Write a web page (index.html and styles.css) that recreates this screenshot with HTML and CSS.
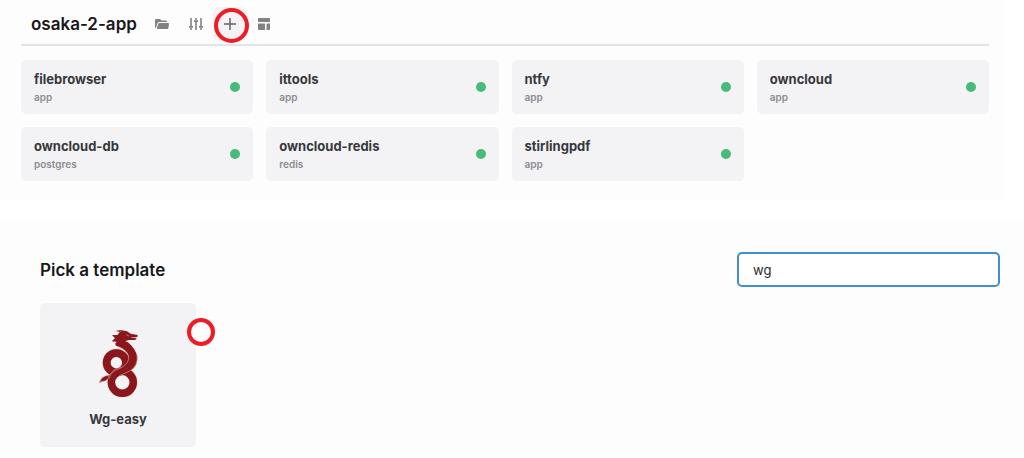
FILE: index.html
```html
<!DOCTYPE html>
<html lang="en">
<head>
<meta charset="utf-8">
<meta name="viewport" content="width=device-width, initial-scale=1">
<title>osaka-2-app</title>
<link rel="stylesheet" href="styles.css">
</head>
<body>
<section class="panel project">
  <header class="project-header">
    <h1 class="project-title">osaka-2-app</h1>
    <nav class="toolbar" aria-label="Project">
      <button class="tool" type="button" aria-label="Services">
        <svg width="16" height="16" viewBox="0 0 16 16" fill="currentColor"><path d="M1 11V4q0-1 1-1h4l1.500 1.500H12q1 0 1 1V6H5.200q-1.200 0-1.700 1.200L1.800 12.200Q1 12 1 11z"/><path d="M5.400 7H14q1.200 0 1 1l-.6 4q-.2 1-1.200 1H3.600q-1 0-.7-1l1.400-4.200Q4.600 7 5.400 7z"/></svg>
      </button>
      <button class="tool" type="button" aria-label="Environment">
        <svg width="16" height="16" viewBox="0 0 16 16" fill="none" stroke="currentColor" stroke-width="1.600"><path d="M3 2v8M3 12v2M8 2v2M8 6v8M13 2v8M13 12v2"/><path stroke-width="1.700" d="M1 10.800h4M6 5.200h4M11 10.800h4"/></svg>
      </button>
      <button class="tool tool-active" type="button" aria-label="Add service">
        <svg width="16" height="16" viewBox="0 0 16 16" fill="none" stroke="currentColor" stroke-width="1.500"><path d="M8 2v12M2 8h12"/></svg>
        <span class="ring ring-large"></span>
      </button>
      <button class="tool" type="button" aria-label="Templates">
        <svg width="16" height="16" viewBox="0 0 16 16" fill="currentColor"><path d="M2 3q0-1 1-1h10q1 0 1 1v3H2zM2 7.500h7V14H3q-1 0-1-1zM10.500 7.500H14V13q0 1-1 1h-2.500z"/></svg>
      </button>
    </nav>
  </header>
  <div class="services">
    <a class="service" href="#filebrowser"><span class="service-text"><span class="service-name">filebrowser</span><span class="service-type">app</span></span><span class="status"></span></a>
    <a class="service" href="#ittools"><span class="service-text"><span class="service-name">ittools</span><span class="service-type">app</span></span><span class="status"></span></a>
    <a class="service" href="#ntfy"><span class="service-text"><span class="service-name">ntfy</span><span class="service-type">app</span></span><span class="status"></span></a>
    <a class="service" href="#owncloud"><span class="service-text"><span class="service-name">owncloud</span><span class="service-type">app</span></span><span class="status"></span></a>
    <a class="service" href="#owncloud-db"><span class="service-text"><span class="service-name">owncloud-db</span><span class="service-type">postgres</span></span><span class="status"></span></a>
    <a class="service" href="#owncloud-redis"><span class="service-text"><span class="service-name">owncloud-redis</span><span class="service-type">redis</span></span><span class="status"></span></a>
    <a class="service" href="#stirlingpdf"><span class="service-text"><span class="service-name">stirlingpdf</span><span class="service-type">app</span></span><span class="status"></span></a>
  </div>
</section>
<section class="panel picker">
  <header class="picker-header">
    <h2 class="picker-title">Pick a template</h2>
    <input class="search" type="text" value="wg" aria-label="Search templates">
  </header>
  <div class="templates">
    <button class="template" type="button">
      <svg class="dragon" width="66" height="85" viewBox="0 0 198 255" fill="none">
        <!-- tail -->
        <path d="M43 188Q48 172 61 168L79 164Q72 178 59 183Q51 184 43 188z" fill="#8b161b" stroke="#c9a296" stroke-width="2"/>
        <!-- upper coil -->
        <circle cx="94" cy="128" r="29" stroke="#c9a296" stroke-width="25"/>
        <circle cx="94" cy="128" r="29" stroke="#8b161b" stroke-width="23"/>
        <!-- lower coil -->
        <circle cx="112" cy="187" r="33" stroke="#c9a296" stroke-width="24"/>
        <circle cx="112" cy="187" r="33" stroke="#8b161b" stroke-width="22"/>
        <!-- body and neck -->
        <path d="M94 65L128 66Q153 87 157 111Q159 138 136 153Q118 162 101 167Q84 174 79 194L69 190Q70 165 89 152Q109 146 122 132Q137 116 127 99Q119 86 93 77z" fill="#8b161b"/>
        <path d="M94 77Q119 86 128 101Q137 119 121 134Q110 145 91 151Q75 160 71 177M156 103Q160 137 136 152Q116 162 103 167" stroke="#c9a296" stroke-width="2"/>
        <!-- head, horns and jaw -->
        <path d="M94 32Q104 28 111 31L126 34L137 41L158 45L157 51L138 51L155 54L151 60L132 60L122 63L130 74L94 78L90 71L98 66L80 64L90 55L81 45L97 45L104 37z" fill="#8b161b"/>
        <path d="M91 34Q101 30 110 34M123 44L132 48M138 52L154 54" stroke="#c9a296" stroke-width="2"/>
      </svg>
      <span class="template-name">Wg-easy</span>
      <span class="ring ring-small"></span>
    </button>
  </div>
</section>
</body>
</html>
```
FILE: styles.css
```css
* {
  box-sizing: border-box;
}

body {
  margin: 0;
  background: #fff;
  color: #18181b;
  font-family: Inter, "Liberation Sans", sans-serif;
}

h1,
h2 {
  margin: 0;
  font-weight: 600;
}

button {
  border: 0;
  padding: 0;
  font: inherit;
  cursor: pointer;
}

.panel {
  background: #fdfdfd;
}

.project {
  margin-right: 20px;
  padding: 4px 15px 18px 21px;
}

.project-header {
  display: flex;
  align-items: center;
  gap: 8px;
  padding-left: 10px;
  height: 42px;
  border-bottom: 2px solid #e4e4e6;
}

.project-title {
  font-size: 17px;
  line-height: 24px;
}

.toolbar {
  display: flex;
}

.tool {
  position: relative;
  display: grid;
  place-items: center;
  width: 34px;
  height: 34px;
  border-radius: 6px;
  background: transparent;
  color: #828285;
}

.tool-active {
  background: #f3f3f5;
  color: #66666a;
}

.ring {
  position: absolute;
  border-radius: 50%;
  border: 4px solid #ee1c25;
}

.ring-large {
  top: 1px;
  left: 1px;
  width: 35px;
  height: 35px;
}

.ring-small {
  top: 15px;
  right: -19px;
  width: 28px;
  height: 28px;
  background: #fdfdfd;
}

.services {
  display: grid;
  grid-template-columns: repeat(4, 1fr);
  gap: 13px;
  padding-top: 14px;
}

.service {
  display: flex;
  align-items: center;
  justify-content: space-between;
  padding: 9px 13px;
  border-radius: 5px;
  background: #f3f3f5;
  color: #38383c;
  text-decoration: none;
}

.service-text {
  display: grid;
}

.service-name {
  font-size: 13px;
  font-weight: 700;
  line-height: 20px;
}

.service-type {
  color: #8c8c90;
  font-size: 10px;
  font-weight: 600;
  line-height: 16px;
}

.status {
  width: 10px;
  height: 10px;
  border-radius: 50%;
  background: #48bb78;
}

.picker {
  margin-top: 20px;
  padding: 33px 24px 11px 40px;
}

.picker-header {
  display: flex;
  align-items: center;
  justify-content: space-between;
}

.picker-title {
  font-size: 17px;
  line-height: 24px;
}

.search {
  width: 263px;
  height: 35px;
  padding: 0 14px;
  border: 2px solid #3f8fd2;
  border-radius: 5px;
  outline: 0;
  background: #fff;
  color: #29292d;
  font: 13px/20px Inter, "Liberation Sans", sans-serif;
}

.templates {
  display: flex;
  padding-top: 16px;
}

.template {
  position: relative;
  display: flex;
  flex-direction: column;
  align-items: center;
  width: 156px;
  padding: 17px 12px 18px;
  border-radius: 5px;
  background: #f3f3f5;
  color: #38383c;
}

.template-name {
  padding-top: 4px;
  font-size: 13px;
  font-weight: 700;
  line-height: 20px;
}
```
